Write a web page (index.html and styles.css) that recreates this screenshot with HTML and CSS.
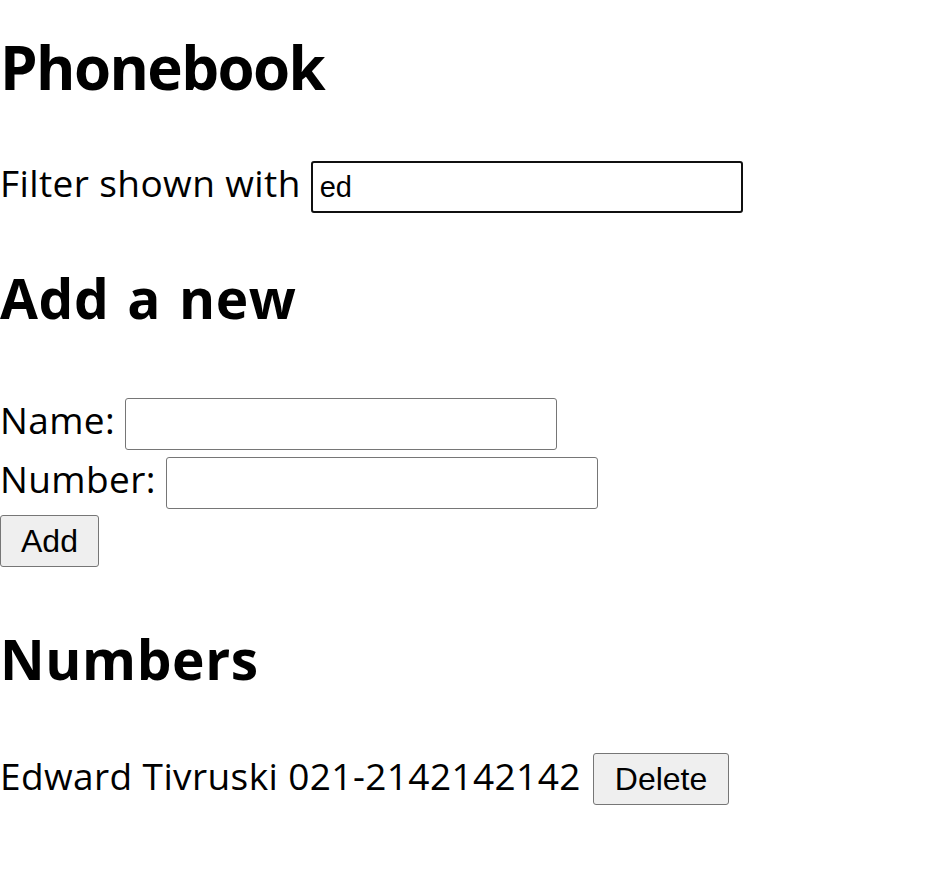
FILE: index.html
```html
<!DOCTYPE html>
<html>
<head>
<meta charset="utf-8">
<title>Phonebook</title>
<link rel="stylesheet" href="styles.css">
</head>
<body>
<div class="app">
  <h1 class="title">Phonebook</h1>
  <div class="row filter-row">Filter shown with <input class="field field-focus" value="ed"></div>
  <h2 class="subtitle">Add a new</h2>
  <form class="add-form">
    <div class="row">Name: <input class="field"></div>
    <div class="row">Number: <input class="field"></div>
    <div class="row"><button type="button" class="btn">Add</button></div>
  </form>
  <h2 class="subtitle">Numbers</h2>
  <div class="row person">Edward Tivruski 021-2142142142 <button type="button" class="btn btn-delete">Delete</button></div>
</div>
</body>
</html>
```

FILE: styles.css
```css
html, body {
  margin: 0;
  padding: 0;
  background: #ffffff;
}
body {
  font-family: "Open Sans", "Noto Sans", sans-serif;
  font-size: 37px;
  letter-spacing: 0.4px;
  color: #000000;
}
.title {
  font-size: 60px;
  font-weight: 700;
  letter-spacing: -1.6px;
  line-height: 80px;
  margin: 27px 0 54px 0;
}
.subtitle {
  font-size: 55px;
  font-weight: 700;
  letter-spacing: 0.6px;
  word-spacing: 3px;
  line-height: 70px;
  margin: 0;
}
.row {
  line-height: 40px;
}
.filter-row {
  margin: 0 0 50px 0;
}
.add-form {
  margin: 65px 0 57px 0;
}
.add-form .row + .row {
  margin-top: 6.5px;
}
.field {
  box-sizing: border-box;
  width: 432px;
  height: 52px;
  font-family: "Liberation Sans", Arial, sans-serif;
  font-size: 29px;
  letter-spacing: 0;
  padding: 1px 7px;
  border: 1px solid #767676;
  border-radius: 3px;
  background: #ffffff;
  color: #000;
  vertical-align: baseline;
}
.field-focus {
  border: 2px solid #101010;
  outline: none;
}
.btn {
  box-sizing: border-box;
  height: 52px;
  font-family: "Liberation Sans", Arial, sans-serif;
  font-size: 32px;
  letter-spacing: 0;
  padding: 0 20px;
  border: 1px solid #767676;
  border-radius: 3px;
  background: #efefef;
  color: #000;
}
.btn-delete {
  padding: 0 21px;
  margin-left: 2px;
}
.person {
  margin-top: 59px;
}
```
